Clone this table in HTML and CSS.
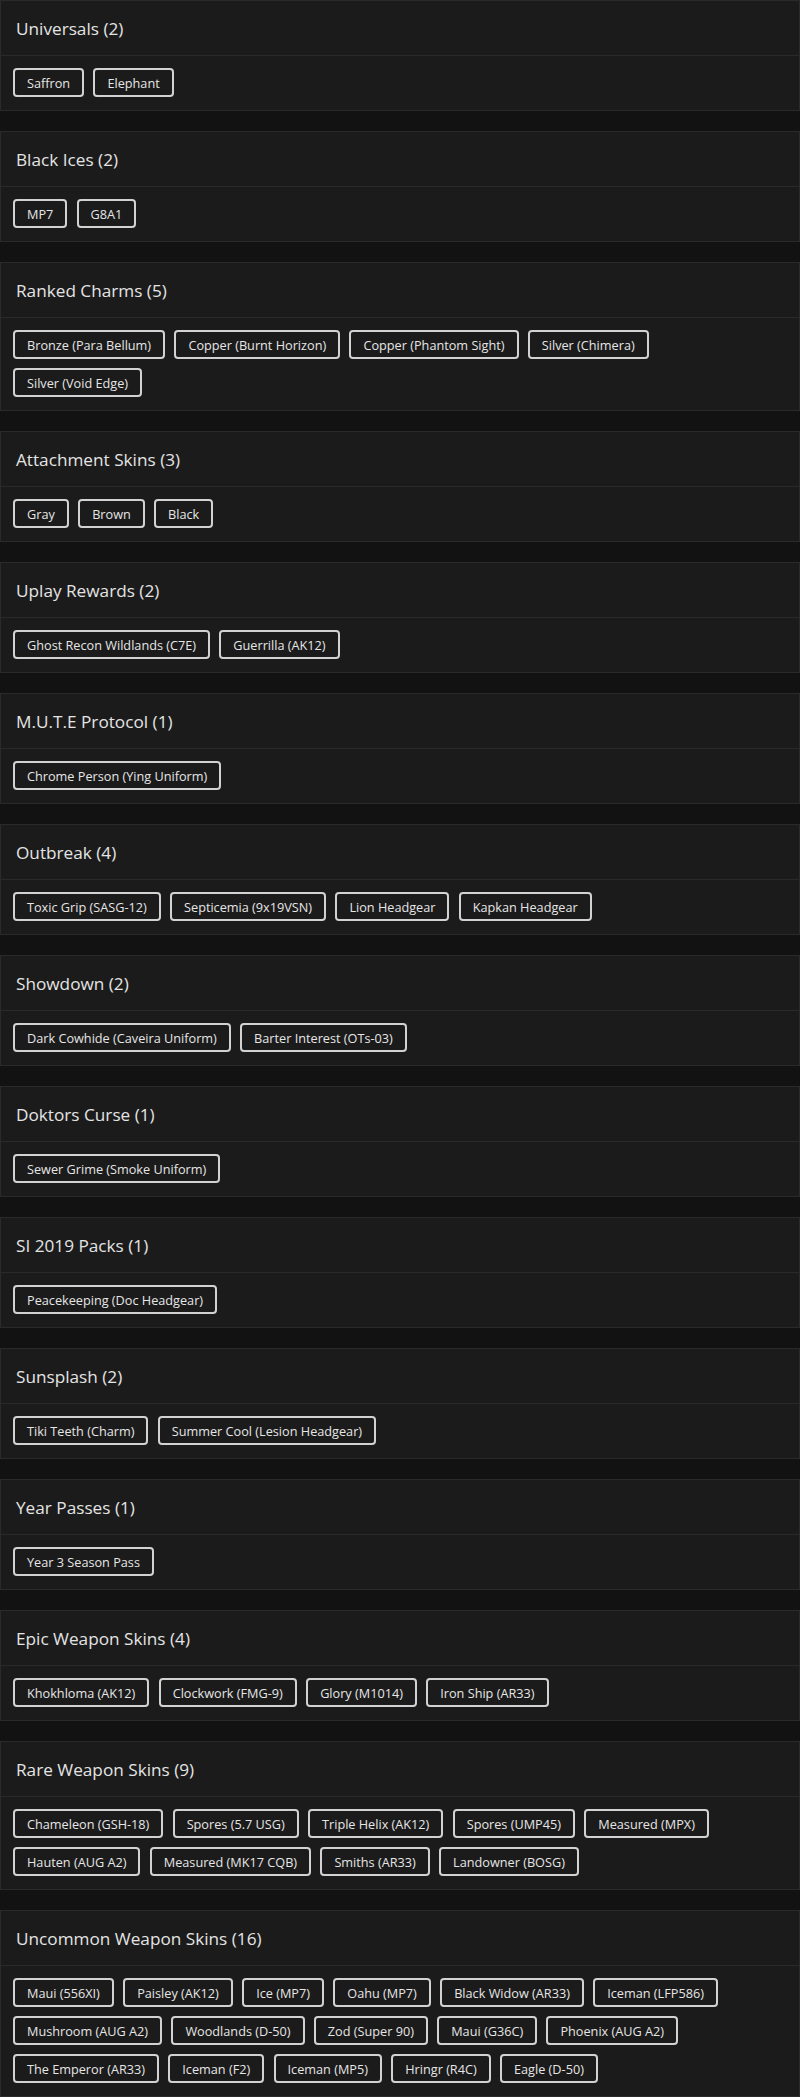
FILE: index.html
```html
<!DOCTYPE html>
<html lang="en">
<head>
<meta charset="utf-8">
<title>Collection</title>
<link rel="stylesheet" href="styles.css">
</head>
<body>
<main class="list">
  <section class="card">
    <h2 class="card-title">Universals (2)</h2>
    <div class="card-body">
      <span class="tag">Saffron</span><span class="tag">Elephant</span>
    </div>
  </section>
  <section class="card">
    <h2 class="card-title">Black Ices (2)</h2>
    <div class="card-body">
      <span class="tag">MP7</span><span class="tag">G8A1</span>
    </div>
  </section>
  <section class="card">
    <h2 class="card-title">Ranked Charms (5)</h2>
    <div class="card-body">
      <span class="tag">Bronze (Para Bellum)</span><span class="tag">Copper (Burnt Horizon)</span><span class="tag">Copper (Phantom Sight)</span><span class="tag">Silver (Chimera)</span><span class="tag">Silver (Void Edge)</span>
    </div>
  </section>
  <section class="card">
    <h2 class="card-title">Attachment Skins (3)</h2>
    <div class="card-body">
      <span class="tag">Gray</span><span class="tag">Brown</span><span class="tag">Black</span>
    </div>
  </section>
  <section class="card">
    <h2 class="card-title">Uplay Rewards (2)</h2>
    <div class="card-body">
      <span class="tag">Ghost Recon Wildlands (C7E)</span><span class="tag">Guerrilla (AK12)</span>
    </div>
  </section>
  <section class="card">
    <h2 class="card-title">M.U.T.E Protocol (1)</h2>
    <div class="card-body">
      <span class="tag">Chrome Person (Ying Uniform)</span>
    </div>
  </section>
  <section class="card">
    <h2 class="card-title">Outbreak (4)</h2>
    <div class="card-body">
      <span class="tag">Toxic Grip (SASG-12)</span><span class="tag">Septicemia (9x19VSN)</span><span class="tag">Lion Headgear</span><span class="tag">Kapkan Headgear</span>
    </div>
  </section>
  <section class="card">
    <h2 class="card-title">Showdown (2)</h2>
    <div class="card-body">
      <span class="tag">Dark Cowhide (Caveira Uniform)</span><span class="tag">Barter Interest (OTs-03)</span>
    </div>
  </section>
  <section class="card">
    <h2 class="card-title">Doktors Curse (1)</h2>
    <div class="card-body">
      <span class="tag">Sewer Grime (Smoke Uniform)</span>
    </div>
  </section>
  <section class="card">
    <h2 class="card-title">SI 2019 Packs (1)</h2>
    <div class="card-body">
      <span class="tag">Peacekeeping (Doc Headgear)</span>
    </div>
  </section>
  <section class="card">
    <h2 class="card-title">Sunsplash (2)</h2>
    <div class="card-body">
      <span class="tag">Tiki Teeth (Charm)</span><span class="tag">Summer Cool (Lesion Headgear)</span>
    </div>
  </section>
  <section class="card">
    <h2 class="card-title">Year Passes (1)</h2>
    <div class="card-body">
      <span class="tag">Year 3 Season Pass</span>
    </div>
  </section>
  <section class="card">
    <h2 class="card-title">Epic Weapon Skins (4)</h2>
    <div class="card-body">
      <span class="tag">Khokhloma (AK12)</span><span class="tag">Clockwork (FMG-9)</span><span class="tag">Glory (M1014)</span><span class="tag">Iron Ship (AR33)</span>
    </div>
  </section>
  <section class="card">
    <h2 class="card-title">Rare Weapon Skins (9)</h2>
    <div class="card-body">
      <span class="tag">Chameleon (GSH-18)</span><span class="tag">Spores (5.7 USG)</span><span class="tag">Triple Helix (AK12)</span><span class="tag">Spores (UMP45)</span><span class="tag">Measured (MPX)</span><span class="tag">Hauten (AUG A2)</span><span class="tag">Measured (MK17 CQB)</span><span class="tag">Smiths (AR33)</span><span class="tag">Landowner (BOSG)</span>
    </div>
  </section>
  <section class="card">
    <h2 class="card-title">Uncommon Weapon Skins (16)</h2>
    <div class="card-body">
      <span class="tag">Maui (556XI)</span><span class="tag">Paisley (AK12)</span><span class="tag">Ice (MP7)</span><span class="tag">Oahu (MP7)</span><span class="tag">Black Widow (AR33)</span><span class="tag">Iceman (LFP586)</span><span class="tag">Mushroom (AUG A2)</span><span class="tag">Woodlands (D-50)</span><span class="tag">Zod (Super 90)</span><span class="tag">Maui (G36C)</span><span class="tag">Phoenix (AUG A2)</span><span class="tag">The Emperor (AR33)</span><span class="tag">Iceman (F2)</span><span class="tag">Iceman (MP5)</span><span class="tag">Hringr (R4C)</span><span class="tag">Eagle (D-50)</span>
    </div>
  </section>
</main>
</body>
</html>
```
FILE: styles.css
```css
html, body {
  margin: 0;
  padding: 0;
  background: #121212;
}
body {
  font-family: "Open Sans", "Noto Sans", sans-serif;
  color: #e2e2e2;
}
.list {
  display: flex;
  flex-direction: column;
  gap: 20px;
}
.card {
  background: #1b1b1b;
  border: 1px solid #2a2a2a;
}
.card-title {
  margin: 0;
  height: 54px;
  padding: 0 15px;
  display: flex;
  align-items: center;
  font-size: 17.2px;
  font-weight: 400;
  color: #e4e4e4;
  border-bottom: 1px solid #2a2a2a;
}
.card-body {
  padding: 12px 16px 13px 12px;
  display: flex;
  flex-wrap: wrap;
  row-gap: 9px;
  column-gap: 9.3px;
}
.tag {
  box-sizing: border-box;
  height: 29px;
  padding: 0 12px;
  display: inline-flex;
  align-items: center;
  border: 2px solid #d2d2d2;
  border-radius: 4px;
  font-size: 12.7px;
  color: #e6e6e6;
  white-space: nowrap;
}
```
